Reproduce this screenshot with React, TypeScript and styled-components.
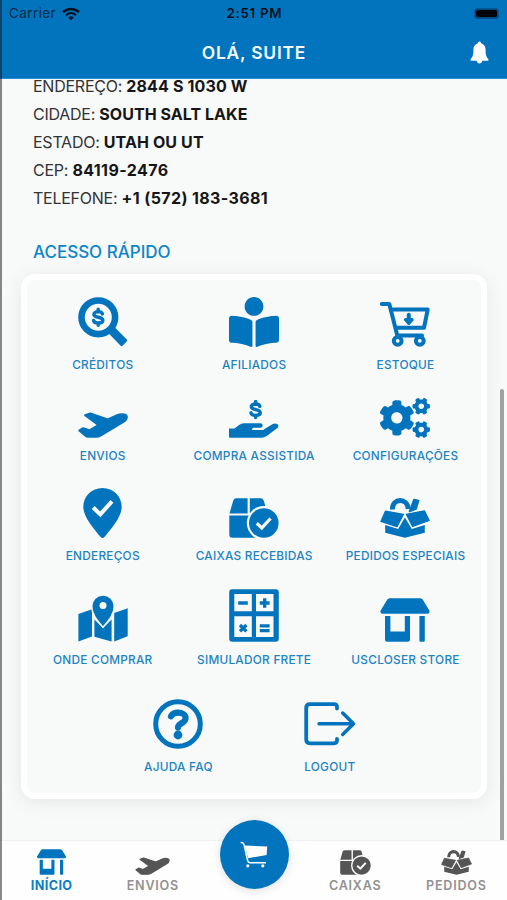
import React from "react";
import styled, { createGlobalStyle } from "styled-components";
import { FaBookReader, FaCogs } from "react-icons/fa";

const BLUE = "#0274be";
const PAGE = "#f8f9f9";

const GlobalStyle = createGlobalStyle`
  * { box-sizing: border-box; }
  body { margin: 0; background: ${PAGE}; font-family: Inter, "Liberation Sans", sans-serif; }
`;

const Screen = styled.div`
  position: relative;
  display: flex;
  flex-direction: column;
  width: 507px;
  height: 900px;
  overflow: hidden;
  background: ${PAGE};
`;

const ScreenEdge = styled.div`
  position: absolute;
  inset: 0 auto 0 0;
  width: 1.5px;
  background: rgba(20, 20, 25, 0.5);
  z-index: 5;
`;

const Header = styled.header`
  flex: none;
  height: 79px;
  background: ${BLUE};
  border-bottom: 1px solid #2a8fd0;
  z-index: 2;
`;

const StatusBar = styled.div`
  display: grid;
  grid-template-columns: 1fr auto 1fr;
  align-items: center;
  height: 27px;
  padding: 0 8px 0 9px;
  font-size: 13px;
  line-height: 27px;
`;

const Carrier = styled.div`
  display: flex;
  align-items: center;
  gap: 6px;
  color: #0b2c49;
  font-size: 13.5px;
  letter-spacing: 0.4px;
`;

const Clock = styled.div`
  color: #04111f;
  font-weight: 600;
  font-size: 13.3px;
  letter-spacing: 0.7px;
  margin-right: -0.7px;
`;

const Battery = styled.div`
  justify-self: end;
  width: 25px;
  height: 11px;
  border: 1px solid #07569a;
  border-radius: 4px;
  background: #010408;
  box-shadow: inset 0 0 0 1px #034a7c;
`;

const TitleBar = styled.div`
  display: grid;
  grid-template-columns: 40px 1fr 40px;
  align-items: center;
  height: 51px;
  padding: 0 8px 0 9px;
`;

const Title = styled.h1`
  grid-column: 2;
  margin: 0;
  color: #f4fbff;
  font-size: 17.4px;
  font-weight: 600;
  letter-spacing: 0.8px;
  text-align: center;
`;

const BellButton = styled.div`
  display: flex;
  justify-content: flex-end;
  padding-right: 10px;
`;

const Content = styled.main`
  flex: 1;
  min-height: 0;
  overflow: hidden;
  padding: 0 20px 0 21px;
`;

const AddressList = styled.div`
  margin: -7px 0 0 12px;
  color: #333;
  font-size: 16px;
  line-height: 28.1px;
`;

const AddressLine = styled.div<{ $valueSpacing: number }>`
  white-space: nowrap;
  letter-spacing: -0.25px;
  b {
    color: #161616;
    font-weight: 700;
    letter-spacing: ${(p) => p.$valueSpacing}px;
  }
`;

const SectionTitle = styled.h2`
  margin: 29px 0 0 12px;
  color: #0d86c7;
  font-size: 17px;
  font-weight: 500;
  line-height: 22px;
`;

const Card = styled.section`
  margin-top: 11px;
  height: 525px;
  border: 6px solid #fff;
  border-radius: 14px;
  background: ${PAGE};
  box-shadow: 0 3px 20px rgba(0, 0, 0, 0.08);
`;

const Row = styled.div<{ $height: number }>`
  display: flex;
  justify-content: center;
  align-items: flex-end;
  height: ${(p) => p.$height}px;
`;

const Tile = styled.div`
  display: flex;
  flex-direction: column;
  align-items: center;
  flex: none;
  width: 151.4px;
  gap: 11px;
  color: ${BLUE};
  svg { display: block; }
`;

const TileLabel = styled.span`
  color: #1c84c2;
  font-size: 11.8px;
  font-weight: 500;
  line-height: 14px;
  white-space: nowrap;
  letter-spacing: 0.26px;
  margin-right: -0.26px;
`;

const CogsIcon = styled(FaCogs)`
  width: 50px;
  height: 40px;
`;

const ScrollThumb = styled.div`
  position: absolute;
  right: 3.5px;
  top: 389px;
  width: 4px;
  height: 451px;
  border-radius: 2px 2px 0 0;
  background: #a0a1a1;
`;

const Nav = styled.nav`
  flex: none;
  display: grid;
  grid-template-columns: repeat(5, 101.2px);
  justify-content: center;
  height: 60px;
  padding-left: 1px;
  background: #fefefe;
  border-top: 1px solid #f1f1f1;
  z-index: 3;
`;

const NavItem = styled.div<{ $active?: boolean }>`
  display: flex;
  flex-direction: column;
  align-items: center;
  justify-content: flex-end;
  gap: 4px;
  padding-bottom: 7px;
  color: ${(p) => (p.$active ? BLUE : "#555")};
  svg { display: block; }
  span {
    color: ${(p) => (p.$active ? "#0a7fc4" : "#929292")};
    font-size: 12.6px;
    font-weight: ${(p) => (p.$active ? 700 : 600)};
    line-height: 14px;
    letter-spacing: ${(p) => (p.$active ? "0.4px" : "0.75px")};
  }
`;

const CartButton = styled.div`
  display: flex;
  align-items: center;
  justify-content: center;
  justify-self: center;
  width: 69px;
  height: 69px;
  margin-top: -21px;
  border-radius: 50%;
  background: ${BLUE};
  box-shadow: 0 2px 10px rgba(0, 0, 0, 0.12);
`;

type IconProps = { width?: number; height?: number; cut?: string };

const Dollar = ({ x, y, s = 1 }: { x: number; y: number; s?: number }) => (
  <path
    transform={`translate(${x} ${y}) scale(${s})`}
    d="M4.6-3.5C4-5.2 2.3-6 0-6c-2.7 0-4.6 1.1-4.6 3C-4.6.8 5-.8 5 3.2 5 5.2 2.9 6.3.1 6.3c-2.7 0-4.6-1-5.1-2.8M0-8.6v3M0 6v2.6"
    fill="none" stroke="currentColor" strokeWidth="3.7" strokeLinecap="round"
  />
);

const CreditsIcon = () => (
  <svg width="50" height="50" viewBox="0 0 50 50">
    <circle cx="20.3" cy="20.3" r="16.8" fill="none" stroke="currentColor" strokeWidth="6.6" />
    <path d="M36.5 31.8l11.4 11.5-4.3 4.5-11.4-11.6z" fill="currentColor" stroke="currentColor" strokeWidth="2.6" strokeLinejoin="round" />
    <Dollar x={20.2} y={20.2} s={0.93} />
  </svg>
);

const StockIcon = () => (
  <svg width="50" height="46" viewBox="0 0 50 46" fill="none" stroke="currentColor" strokeWidth="4" strokeLinecap="round" strokeLinejoin="round">
    <path d="M1.9 3H9.3L17.3 34.4H42M11.5 8.5H47.7L44 26.8H16" />
    <circle cx="17.7" cy="39.8" r="3.9" /><circle cx="39.8" cy="39.8" r="3.9" />
    <path d="M28.8 13.8v8" strokeWidth="4" />
    <path d="M25.5 18.7h6.6l-3.3 3.4z" fill="currentColor" strokeWidth="3.2" />
  </svg>
);

const PlaneIcon = ({ width = 50, height = 26 }: IconProps) => (
  <svg width={width} height={height} viewBox="0 0 50 26">
    <path d="M7 3.2L12.3 1.4 29.8 7.4 38.5 3.4C42 1.8 47.5 1.5 48.7 3.8 49.6 6.6 47.8 8.6 45 10.2L23 23.4Q20.7 24.8 18 24.8H9.8Q8 24.8 6.8 23.2L1.2 18.6 5 16.1 11.5 18.2 20.2 13z" fill="currentColor" stroke="currentColor" strokeWidth="1.8" strokeLinejoin="round" />
  </svg>
);

const HandIcon = () => (
  <svg width="50" height="38" viewBox="0 0 50 38">
    <Dollar x={26.6} y={9.6} s={0.93} />
    <path d="M0 28.4H5.5L10.4 24.7Q12.5 23.2 15 23.2H31.2C34.5 23.2 34.5 27.8 31.2 27.8H24V29.8H34.3L43.8 24.1C47.5 22 51.3 25.3 48.4 28L37.7 36Q35.3 37.8 32.5 37.8H1Q0 37.8 0 36.8z" fill="currentColor" />
    <path d="M23.5 29.3H34" stroke={PAGE} strokeWidth="1.4" strokeLinecap="round" />
  </svg>
);

const PinIcon = () => (
  <svg width="39" height="50" viewBox="0 0 39 50">
    <path d="M19.5 0C8.5 0 .3 8.4.3 19 .3 29 11 41 17.6 49Q19.5 50.8 21.4 49C28 41 38.7 29 38.7 19 38.7 8.4 30.5 0 19.5 0z" fill="currentColor" />
    <path d="M10.2 19.5l7.1 6.8L29 13.4" fill="none" stroke={PAGE} strokeWidth="4" />
  </svg>
);

const BoxCheckIcon = ({ width = 50, height = 40, cut = PAGE }: IconProps) => (
  <svg width={width} height={height} viewBox="0 0 50 40" fill="currentColor">
    <path d="M7.5.3H18.6V15.4H.5L4.2 2.7Q5 .3 7.5.3zM20.8.3H31.5Q34 .3 34.8 2.7L38.5 15.4H20.8zM.3 17.6H38V39.7H3.3Q.3 39.7.3 36.7z" />
    <circle cx="34.8" cy="25" r="17" fill={cut} />
    <circle cx="34.8" cy="25" r="14.8" />
    <path d="M27.8 25.3l5 4.6 8.7-9.4" fill="none" stroke={cut} strokeWidth="3.2" />
  </svg>
);

const SpecialIcon = ({ width = 50, height = 40 }: IconProps) => (
  <svg width={width} height={height} viewBox="0 0 50 40" fill="currentColor">
    <path d="M12.4 11.6C12.4-.4 27.6-.4 28.2 11" fill="none" stroke="currentColor" strokeWidth="5" />
    <path d="M34 1.6L38.6 2.6 36 11 29.6 13.4z" stroke="currentColor" strokeWidth="1.8" strokeLinejoin="round" />
    <path d="M5.4 13.2L23.5 16.3 17 28.6.9 23.4zM26.3 16.3L44.5 12.8 49.2 22.4 32.6 28.4z" stroke="currentColor" strokeWidth="1.2" strokeLinejoin="round" />
    <path d="M5.2 27L18.2 31 24.9 19.6 31.8 31 44.8 27V34.8L24.9 39.8 5.2 34.8z" />
  </svg>
);

const MapIcon = () => (
  <svg width="50" height="48" viewBox="0 0 50 48" fill="currentColor">
    <path d="M.4 20L14 15.2V42.6L.4 47.5zM16.4 25.5L25 34 33.6 25.5V47.4L16.4 42.7zM36.2 19L49.7 14.2V42.2L36.2 47.4z" />
    <path d="M25 33.2C18.6 25.8 13.7 20 13.7 12.2a11.3 11.3 0 0 1 22.6 0C36.3 20 31.4 25.8 25 33.2z" stroke={PAGE} strokeWidth="1.5" />
    <circle cx="25" cy="11.5" r="3.5" fill={PAGE} />
  </svg>
);

const CalculatorIcon = () => (
  <svg width="50" height="53" viewBox="0 0 50 53">
    <rect x=".2" y=".2" width="49.6" height="52.6" rx="3" fill="currentColor" />
    <path d="M5.3 5H22.8V22.3H5.3zM27 5H44.5V22.3H27zM5.3 27.3H22.8V48H5.3zM27 27.3H44.5V48H27z" fill={PAGE} />
    <path d="M9.2 14H18.8M30.8 14H40.6M35.7 9.3V18.8M11 36l6.4 6.4M17.4 36L11 42.4M30.8 36.8H40.6M30.8 41.7H40.6" stroke="currentColor" strokeWidth="3.3" />
  </svg>
);

const StoreIcon = ({ width = 50, height = 44 }: IconProps) => (
  <svg width={width} height={height} viewBox="0 0 50 44" fill="currentColor">
    <path d="M9.7.3H40.3Q42 .3 43 2L49.5 12.7Q50 15.7 47.3 15.7H2.7Q0 15.7.5 12.7L7 2Q8 .3 9.7.3z" />
    <path d="M5 18H10.4V33.4H24.8V18H30V41.7Q30 43.7 28 43.7H7Q5 43.7 5 41.7zM39.4 18H44.8V42.5Q44.8 43.7 43.6 43.7H40.6Q39.4 43.7 39.4 42.5z" />
  </svg>
);

const HelpIcon = () => (
  <svg width="50" height="50" viewBox="0 0 50 50" fill="none" stroke="currentColor">
    <circle cx="25" cy="25" r="22.3" strokeWidth="5" />
    <path d="M18 17.2C19.4 14.8 21.7 13.7 25 13.7 29.5 13.7 32.6 15.9 32.6 19.2 32.6 24.4 25 24 25 28.4" strokeWidth="6.2" strokeLinecap="round" />
    <circle cx="25" cy="36" r="4.4" fill="currentColor" stroke="none" />
  </svg>
);

const LogoutIcon = () => (
  <svg width="52" height="47" viewBox="0 0 52 47" fill="none" stroke="currentColor" strokeWidth="3.8" strokeLinecap="round" strokeLinejoin="round">
    <path d="M33 6.6V5.2Q33 2.2 30 2.2H6Q2.2 2.2 2.2 6V37.5Q2.2 41.3 6 41.3H30Q33 41.3 33 38.3V37" />
    <path d="M15 21.7H49.5M38.7 11L49.5 21.7 38.7 32.4" strokeWidth="3.5" />
  </svg>
);

const CartIcon = () => (
  <svg width="28" height="28" viewBox="0 0 28 28" fill="#fff">
    <path d="M.7 1.7Q3.4 1.2 4 3.6L7.4 18.6Q8 21.8 10.4 21.8H26" fill="none" stroke="#fff" strokeWidth="1.5" />
    <path d="M4.6 4.6L27.2 5.6 26.6 14 8.2 17.2z" />
    <circle cx="7.8" cy="24.8" r="1.6" /><circle cx="22.8" cy="24.8" r="1.6" />
  </svg>
);

const WifiIcon = () => (
  <svg width="18" height="14" viewBox="0 0 18 14" fill="none" stroke="#06131f">
    <path d="M1 5.2C5.5.9 12.5.9 17 5.2" strokeWidth="2.5" />
    <path d="M4 8.2C7 5.5 11 5.5 14 8.2" strokeWidth="2.2" />
    <path d="M6.2 10.4Q9 8.2 11.8 10.4L9 13.3z" fill="#06131f" stroke="none" />
  </svg>
);

const BellIcon = () => (
  <svg width="19" height="24" viewBox="0 0 19 24" fill="#fff">
    <path d="M9.5.5C8.4.5 7.9 1.2 7.9 2.3 4.7 3.2 3.4 5.8 3.4 9 3.4 15 2.3 16.3.7 18 .2 19 .5 19.8 1.5 19.8H17.5C18.5 19.8 18.8 19 18.3 18 16.7 16.3 15.6 15 15.6 9 15.6 5.8 14.3 3.2 11.1 2.3 11.1 1.2 10.6.5 9.5.5zM6.8 19.8H12.2C11.9 23.4 7.1 23.4 6.8 19.8z" />
  </svg>
);

const address = [
  { name: "ENDEREÇO", value: "2844 S 1030 W", valueSpacing: 0.15 },
  { name: "CIDADE", value: "SOUTH SALT LAKE", valueSpacing: 0.05 },
  { name: "ESTADO", value: "UTAH OU UT", valueSpacing: 0.1 },
  { name: "CEP", value: "84119-2476", valueSpacing: 0.4 },
  { name: "TELEFONE", value: "+1 (572) 183-3681", valueSpacing: 0.38 },
];

const rows = [
  { height: 92, tiles: [
    { label: "CRÉDITOS", icon: <CreditsIcon /> },
    { label: "AFILIADOS", icon: <FaBookReader size={50} /> },
    { label: "ESTOQUE", icon: <StockIcon /> },
  ] },
  { height: 91, tiles: [
    { label: "ENVIOS", icon: <PlaneIcon /> },
    { label: "COMPRA ASSISTIDA", icon: <HandIcon /> },
    { label: "CONFIGURAÇÕES", icon: <CogsIcon /> },
  ] },
  { height: 100, tiles: [
    { label: "ENDEREÇOS", icon: <PinIcon /> },
    { label: "CAIXAS RECEBIDAS", icon: <BoxCheckIcon /> },
    { label: "PEDIDOS ESPECIAIS", icon: <SpecialIcon /> },
  ] },
  { height: 104, tiles: [
    { label: "ONDE COMPRAR", icon: <MapIcon /> },
    { label: "SIMULADOR FRETE", icon: <CalculatorIcon /> },
    { label: "USCLOSER STORE", icon: <StoreIcon /> },
  ] },
  { height: 106.5, tiles: [
    { label: "AJUDA FAQ", icon: <HelpIcon /> },
    { label: "LOGOUT", icon: <LogoutIcon /> },
  ] },
];

export default function App() {
  return (
    <Screen>
      <GlobalStyle />
      <ScreenEdge />
      <Header>
        <StatusBar>
          <Carrier>Carrier <WifiIcon /></Carrier>
          <Clock>2:51 PM</Clock>
          <Battery />
        </StatusBar>
        <TitleBar>
          <Title>OLÁ, SUITE</Title>
          <BellButton><BellIcon /></BellButton>
        </TitleBar>
      </Header>
      <Content>
        <AddressList>
          {address.map((a) => (
            <AddressLine key={a.name} $valueSpacing={a.valueSpacing}>{a.name}: <b>{a.value}</b></AddressLine>
          ))}
        </AddressList>
        <SectionTitle>ACESSO RÁPIDO</SectionTitle>
        <Card>
          {rows.map((row, i) => (
            <Row key={i} $height={row.height}>
              {row.tiles.map((t) => (
                <Tile key={t.label}>{t.icon}<TileLabel>{t.label}</TileLabel></Tile>
              ))}
            </Row>
          ))}
        </Card>
      </Content>
      <ScrollThumb />
      <Nav>
        <NavItem $active><StoreIcon width={31} height={26} /><span>INÍCIO</span></NavItem>
        <NavItem><PlaneIcon width={35} height={18} /><span>ENVIOS</span></NavItem>
        <CartButton><CartIcon /></CartButton>
        <NavItem><BoxCheckIcon width={31} height={25} cut="#fefefe" /><span>CAIXAS</span></NavItem>
        <NavItem><SpecialIcon width={31} height={25} /><span>PEDIDOS</span></NavItem>
      </Nav>
    </Screen>
  );
}
